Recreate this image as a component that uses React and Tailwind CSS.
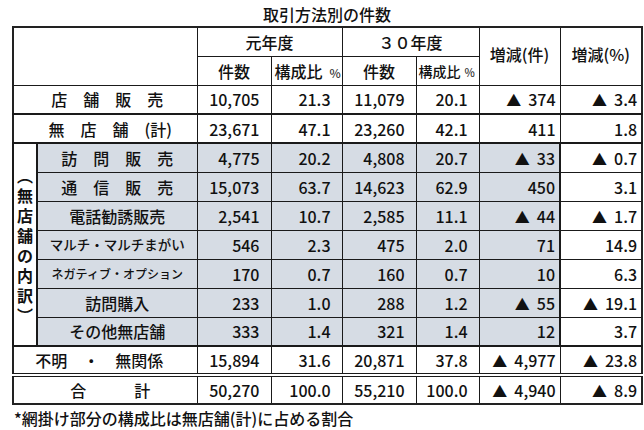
const JP = 'font-["Noto_Sans_CJK_JP","Noto_Sans",sans-serif]'

const SUB_ROWS = [
  { label: '訪　問　販　売', size: 'text-[16px]', a: '4,775', ar: '20.2', b: '4,808', br: '20.7', d: '▲33', dp: '▲0.7' },
  { label: '通　信　販　売', size: 'text-[16px]', a: '15,073', ar: '63.7', b: '14,623', br: '62.9', d: '450', dp: '3.1' },
  { label: '電話勧誘販売', size: 'text-[16px]', a: '2,541', ar: '10.7', b: '2,585', br: '11.1', d: '▲44', dp: '▲1.7' },
  { label: 'マルチ・マルチまがい', size: 'text-[13.5px]', a: '546', ar: '2.3', b: '475', br: '2.0', d: '71', dp: '14.9' },
  { label: 'ネガティブ・オプション', size: 'text-[12px]', a: '170', ar: '0.7', b: '160', br: '0.7', d: '10', dp: '6.3' },
  { label: '訪問購入', size: 'text-[16px]', a: '233', ar: '1.0', b: '288', br: '1.2', d: '▲55', dp: '▲19.1' },
  { label: 'その他無店舗', size: 'text-[16px]', a: '333', ar: '1.4', b: '321', br: '1.4', d: '12', dp: '3.7' },
]

const box = 'border border-[#1a1a1a] h-[29px] p-0 leading-none whitespace-nowrap'
const cell = `${box} text-[16px]`
const num = `${cell} text-right pr-[11px]`
const diff = `${cell} text-right pr-[4px]`

// "▲" gets its own gap like the spreadsheet export
function Val({ v }) {
  if (v.startsWith('▲')) {
    return (
      <>
        <span className="text-[15px]">▲</span>
        <span className="ml-[7px]">{v.slice(1)}</span>
      </>
    )
  }
  return v
}

function VerticalLabel() {
  const chars = ['︵', '無', '店', '舗', 'の', '内', '訳', '︶']
  return (
    <div className="flex flex-col items-center text-[16px] font-bold leading-[20px]">
      {chars.map((c, i) => (
        <span key={i} className="h-[20px]">{c}</span>
      ))}
    </div>
  )
}

export default function App() {
  return (
    <div className={`w-[644px] h-[430px] bg-white text-[#111] ${JP} font-medium overflow-hidden`}>
      <div className="h-[26px] flex items-center justify-center pl-[10px] text-[16px] leading-none pt-[1px]">
        取引方法別の件数
      </div>
      <div className="pl-[12px]">
        <table className="table-fixed border-collapse w-[629px] border-2 border-[#222]">
          <colgroup>
            <col className="w-[24px]" />
            <col className="w-[160px]" />
            <col className="w-[74px]" />
            <col className="w-[71px]" />
            <col className="w-[74px]" />
            <col className="w-[63px]" />
            <col className="w-[81px]" />
            <col className="w-[82px]" />
          </colgroup>
          <tbody>
            <tr>
              <td colSpan={2} rowSpan={2} className={cell}></td>
              <td colSpan={2} className={`${cell} text-center`}>元年度</td>
              <td colSpan={2} className={`${cell} text-center`}>３０年度</td>
              <td rowSpan={2} className={`${cell} text-center pb-[4px]`}>増減(件)</td>
              <td rowSpan={2} className={`${cell} text-center pb-[4px]`}>増減(%)</td>
            </tr>
            <tr>
              <td className={`${cell} text-center`}>件数</td>
              <td className={`${cell} text-left pl-[3px]`}>
                構成比<span className="text-[12px] text-[#333] ml-[7px]">%</span>
              </td>
              <td className={`${cell} text-center`}>件数</td>
              <td className={`${box} text-left pl-[2px] text-[14px]`}>
                構成比<span className="text-[11px] text-[#333] ml-[4px]">%</span>
              </td>
            </tr>
            <tr>
              <td colSpan={2} className={`${cell} text-center border-b-2 pl-[4px]`}>店　舗　販　売</td>
              <td className={`${num} border-b-2`}>10,705</td>
              <td className={`${num} border-b-2`}>21.3</td>
              <td className={`${num} border-b-2`}>11,079</td>
              <td className={`${num} border-b-2`}>20.1</td>
              <td className={`${diff} border-b-2`}><Val v="▲374" /></td>
              <td className={`${diff} border-b-2`}><Val v="▲3.4" /></td>
            </tr>
            <tr>
              <td colSpan={2} className={`${cell} text-center pl-[10px]`}>無　店　舗　(計)</td>
              <td className={num}>23,671</td>
              <td className={num}>47.1</td>
              <td className={num}>23,260</td>
              <td className={num}>42.1</td>
              <td className={diff}>411</td>
              <td className={diff}>1.8</td>
            </tr>
            {SUB_ROWS.map((r, i) => {
              const top = i === 0 ? 'border-t-2' : ''
              const bot = i === SUB_ROWS.length - 1 ? 'border-b-2' : ''
              const sh = `bg-[#d6dce4] ${top} ${bot}`
              return (
                <tr key={i}>
                  {i === 0 && (
                    <td rowSpan={7} className="border-2 border-[#1a1a1a] p-0 align-middle">
                      <VerticalLabel />
                    </td>
                  )}
                  <td className={`${box} ${sh} border-l-2 text-center ${r.size}`}>{r.label}</td>
                  <td className={`${num} ${sh}`}>{r.a}</td>
                  <td className={`${num} ${sh}`}>{r.ar}</td>
                  <td className={`${num} ${sh}`}>{r.b}</td>
                  <td className={`${num} ${sh}`}>{r.br}</td>
                  <td className={`${diff} ${sh} border-r-2`}><Val v={r.d} /></td>
                  <td className={`${diff} ${top} ${bot}`}><Val v={r.dp} /></td>
                </tr>
              )
            })}
            <tr>
              <td colSpan={2} className={`${cell} text-center border-b-4 border-double pr-[12px]`}>不明　・　無関係</td>
              <td className={`${num} border-b-4 border-double`}>15,894</td>
              <td className={`${num} border-b-4 border-double`}>31.6</td>
              <td className={`${num} border-b-4 border-double`}>20,871</td>
              <td className={`${num} border-b-4 border-double`}>37.8</td>
              <td className={`${diff} border-b-4 border-double`}><Val v="▲4,977" /></td>
              <td className={`${diff} border-b-4 border-double`}><Val v="▲23.8" /></td>
            </tr>
            <tr>
              <td colSpan={2} className={`${cell} h-[27px] text-center pl-[10px]`}>合　　　計</td>
              <td className={`${num} h-[27px]`}>50,270</td>
              <td className={`${num} h-[27px]`}>100.0</td>
              <td className={`${num} h-[27px]`}>55,210</td>
              <td className={`${num} h-[27px]`}>100.0</td>
              <td className={`${diff} h-[27px]`}><Val v="▲4,940" /></td>
              <td className={`${diff} h-[27px]`}><Val v="▲8.9" /></td>
            </tr>
          </tbody>
        </table>
      </div>
      <div className="pl-[14px] pt-[5px] text-[16px] leading-none">
        *網掛け部分の構成比は無店舗(計)に占める割合
      </div>
    </div>
  )
}
